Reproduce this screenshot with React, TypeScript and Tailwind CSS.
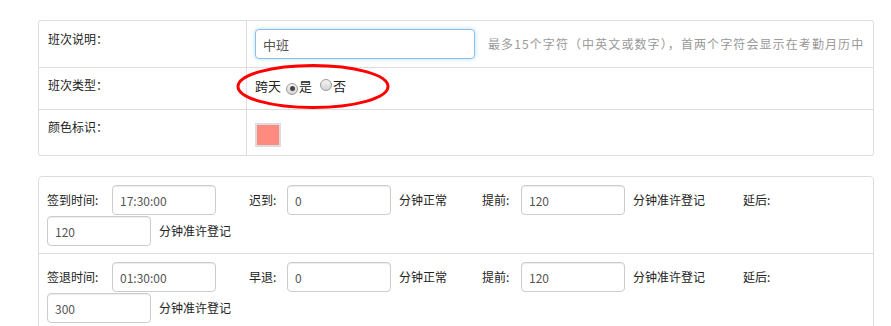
import React from "react";

const font = { fontFamily: '"Noto Sans CJK SC", "Noto Sans", sans-serif' };

function Radio({ checked }: { checked?: boolean }) {
  return (
    <span className="relative inline-flex items-center justify-center w-[12px] h-[12px] rounded-full border border-[#9a9a9a] bg-gradient-to-b from-[#f4f4f4] to-[#d4d4d4]">
      {checked && <span className="w-[5px] h-[5px] rounded-full bg-[#444]" />}
    </span>
  );
}

function Field({ value }: { value: string }) {
  return (
    <input
      readOnly
      value={value}
      className="w-[104px] h-[30px] border border-[#ccc] rounded-[4px] px-[7px] text-[12px] text-[#555] bg-white outline-none shadow-[inset_0_1px_1px_rgba(0,0,0,0.075)]"
      style={font}
    />
  );
}

function TimeRow({
  label,
  time,
  lateLabel,
  late,
  early,
  after,
  top,
}: {
  label: string;
  time: string;
  lateLabel: string;
  late: string;
  early: string;
  after: string;
  top?: boolean;
}) {
  return (
    <div className={`px-[8px] pt-[8px] pb-[7px] ${top ? "" : "border-t border-[#ddd]"}`}>
      <div className="flex flex-wrap items-center gap-y-[1px] text-[12px] text-[#222]">
        <span className="w-[65px]">{label}</span>
        <Field value={time} />
        <span className="ml-[33px] w-[38px]">{lateLabel}</span>
        <Field value={late} />
        <span className="ml-[8px] w-[83px]">分钟正常</span>
        <span className="w-[39px]">提前:</span>
        <Field value={early} />
        <span className="ml-[8px] w-[110px]">分钟准许登记</span>
        <span className="w-[40px]">延后:</span>
        <Field value={after} />
        <span className="ml-[8px]">分钟准许登记</span>
      </div>
    </div>
  );
}

export default function App() {
  return (
    <div className="relative w-[891px] h-[326px] overflow-hidden bg-white pt-[20px] pl-[38px]" style={font}>
      <div className="relative w-[836px] border border-[#ddd] rounded-[3px] text-[12px] text-[#222]">
        <div className="flex h-[46px]">
          <div className="w-[208px] border-r border-[#ddd] pl-[9px] pt-[8px] leading-[20px]">班次说明：</div>
          <div className="flex-1 flex items-start pl-[8px] pt-[8px]">
            <input
              readOnly
              value="中班"
              className="w-[220px] h-[30px] border border-[#8cc0ea] rounded-[4px] px-[7px] text-[13px] text-[#555] bg-white outline-none shadow-[0_0_4px_rgba(102,175,233,0.45)]"
              style={font}
            />
            <span className="ml-[13px] h-[30px] leading-[30px] text-[#999] tracking-[1.1px]">
              最多15个字符（中英文或数字），首两个字符会显示在考勤月历中
            </span>
          </div>
        </div>
        <div className="flex h-[42px] border-t border-[#ddd]">
          <div className="w-[208px] border-r border-[#ddd] pl-[9px] pt-[7px] leading-[20px]">班次类型：</div>
          <div className="flex-1 flex items-start pl-[8px] pt-[8px]">
            <div className="flex items-center h-[20px] text-[13px] text-[#222]">
              <span>跨天</span>
              <span className="ml-[5px]">
                <Radio checked />
              </span>
              <span className="ml-[1px]">是</span>
              <span className="ml-[8px]">
                <Radio />
              </span>
              <span className="ml-[1px]">否</span>
            </div>
          </div>
        </div>
        <div className="flex h-[46px] border-t border-[#ddd]">
          <div className="w-[208px] border-r border-[#ddd] pl-[9px] pt-[7px] leading-[20px]">颜色标识：</div>
          <div className="flex-1 pl-[8px] pt-[13px]">
            <div className="w-[26px] h-[24px] border-2 border-[#dcdcdc] bg-[#ff8a7f]" />
          </div>
        </div>
        <svg
          className="absolute left-[194px] top-[41px] pointer-events-none"
          width="160"
          height="50"
          viewBox="0 0 160 50"
        >
          <ellipse cx="80" cy="24.5" rx="75" ry="21" fill="none" stroke="#ff0000" strokeWidth="3" />
        </svg>
      </div>

      <div className="mt-[20px] w-[836px] border border-[#ddd] rounded-[4px]">
        <TimeRow top label="签到时间:" time="17:30:00" lateLabel="迟到:" late="0" early="120" after="120" />
        <TimeRow label="签退时间:" time="01:30:00" lateLabel="早退:" late="0" early="120" after="300" />
      </div>
    </div>
  );
}
